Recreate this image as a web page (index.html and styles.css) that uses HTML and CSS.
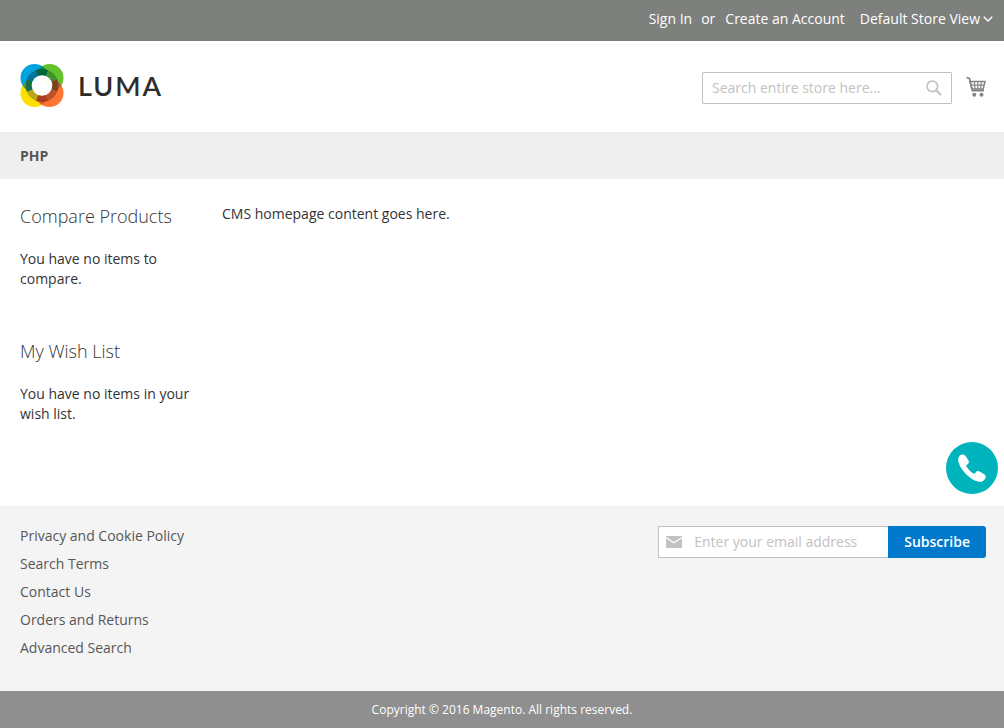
FILE: index.html
```html
<!DOCTYPE html>
<html lang="en">
<head>
<meta charset="utf-8">
<meta name="viewport" content="width=device-width, initial-scale=1">
<title>Home page</title>
<link rel="stylesheet" href="styles.css">
</head>
<body>
<header>
  <div class="panel">
    <a href="#">Sign In</a>
    <span class="or">or</span>
    <a href="#">Create an Account</a>
    <button class="switcher" type="button">Default Store View
      <svg width="10" height="6" viewBox="0 0 10 6" aria-hidden="true"><path d="M.7.7 5 5 9.3.7" fill="none" stroke="currentColor" stroke-width="1.4"/></svg>
    </button>
  </div>
  <div class="header-content">
    <a class="logo" href="#">
      <svg width="44" height="43" viewBox="-22 -21.500 44 43" aria-hidden="true">
        <circle cx="7.500" cy="-7.500" r="14" fill="#64c22d"/>
        <circle cx="-7.500" cy="7.500" r="14" fill="#ffdf00"/>
        <circle cx="7.500" cy="7.500" r="14" fill="#ff7433"/>
        <circle cx="-7.500" cy="-7.500" r="14" fill="#00a3df"/>
        <path d="M0-19.300Q3-17.500 5-14L0-8-5-14Q-3-17.500 0-19.300" fill="#008a55"/>
        <path d="M19.300 0Q17.500 3 14 5L8 0 14-5Q17.500-3 19.300 0" fill="#a36a2c"/>
        <path d="M0 19.300Q3 17.500 5 14L0 8-5 14Q-3 17.500 0 19.300" fill="#e25b24"/>
        <path d="M-19.300 0Q-17.500 3-14 5L-8 0-14-5Q-17.500-3-19.300 0" fill="#4d9950"/>
        <g fill="none" stroke-width="6.500">
          <path d="M-12.200-5A13.200 13.200 0 0 1-5-12.200" stroke="#00739a"/>
          <path d="M-5-12.200A13.200 13.200 0 0 1 5-12.200" stroke="#006536"/>
          <path d="M5-12.200A13.200 13.200 0 0 1 12.200-5" stroke="#43912d"/>
          <path d="M12.200-5A13.200 13.200 0 0 1 12.200 5" stroke="#7a431f"/>
          <path d="M12.200 5A13.200 13.200 0 0 1 5 12.200" stroke="#b9532c"/>
          <path d="M5 12.200A13.200 13.200 0 0 1-5 12.200" stroke="#a93c1c"/>
          <path d="M-5 12.200A13.200 13.200 0 0 1-12.200 5" stroke="#b9a51e"/>
          <path d="M-12.200 5A13.200 13.200 0 0 1-12.200-5" stroke="#19713f"/>
        </g>
        <circle r="10.300" fill="#fff"/>
      </svg>
      <span>LUMA</span>
    </a>
    <form class="search">
      <input type="search" aria-label="Search" placeholder="Search entire store here...">
      <button type="button" aria-label="Search">
        <svg width="16" height="16" viewBox="0 0 16 16" aria-hidden="true"><circle cx="6.300" cy="6.300" r="5.300" fill="none" stroke="#c2c2c2" stroke-width="1.700"/><path d="m10 10 5 5" stroke="#c2c2c2" stroke-width="2.200"/></svg>
      </button>
    </form>
    <a class="cart" href="#" aria-label="My Cart">
      <svg width="20" height="22" viewBox="0 0 20 22" aria-hidden="true">
        <path d="M.5 1.500 3.500 2.500 6.300 14.500H18" fill="none" stroke="#858585" stroke-width="1.800"/>
        <path d="M4 5.500h15L17.200 13H6z" fill="none" stroke="#858585" stroke-width="1.500"/>
        <path d="M5 9.200h13M8.300 5.500l.8 8M11.800 5.500v8M15.300 5.500l-.8 8" fill="none" stroke="#858585" stroke-width="1.200"/>
        <circle cx="8.300" cy="18.800" r="2" fill="#858585"/><circle cx="15.500" cy="18.800" r="2" fill="#858585"/>
      </svg>
    </a>
  </div>
</header>
<nav class="nav"><a href="#">PHP</a></nav>
<div class="columns">
  <aside>
    <section class="block">
      <h2>Compare Products</h2>
      <p>You have no items to compare.</p>
    </section>
    <section class="block">
      <h2>My Wish List</h2>
      <p>You have no items in your wish list.</p>
    </section>
  </aside>
  <main><p>CMS homepage content goes here.</p></main>
</div>
<footer>
  <div class="footer-content">
    <ul>
      <li><a href="#">Privacy and Cookie Policy</a></li>
      <li><a href="#">Search Terms</a></li>
      <li><a href="#">Contact Us</a></li>
      <li><a href="#">Orders and Returns</a></li>
      <li><a href="#">Advanced Search</a></li>
    </ul>
    <form class="newsletter">
      <label class="email">
        <svg width="16" height="12" viewBox="0 0 16 12" aria-hidden="true"><path d="M0 0h16v12H0z" fill="#c2c2c2"/><path d="m0 1.500 8 5.300 8-5.300" fill="none" stroke="#fff" stroke-width="1.300"/></svg>
        <input type="email" aria-label="Email address" placeholder="Enter your email address">
      </label>
      <button type="button">Subscribe</button>
    </form>
  </div>
  <small class="copyright">Copyright © 2016 Magento. All rights reserved.</small>
</footer>
<a class="call" href="#" aria-label="Call us">
  <svg width="28" height="28" viewBox="0 0 28 28" aria-hidden="true"><path d="M2.500 1C4.300 0 6.500.3 7.700 2.200L10.500 6.500C11.300 8 10.800 9.200 9.600 10.200L8.600 11C8.100 11.600 8.200 12.200 8.700 13C10.400 15.500 12.500 17.700 15 19.300C15.800 19.800 16.500 19.800 17 19.200L18 17.900C18.900 16.900 20.300 16.800 21.600 17.500L26.200 20.200C28 21.300 28.200 23.200 27 25C25 28 21.500 28.500 18 27C10.500 23.700 4 17 1 9.700C-.5 6 .2 2.500 2.500 1Z" fill="#fff"/></svg>
</a>
</body>
</html>
```
FILE: styles.css
```css
* { box-sizing: border-box; }
body {
  margin: 0;
  min-height: 100vh;
  display: flex;
  flex-direction: column;
  font: 14px/20px "Open Sans", "Noto Sans", sans-serif;
  color: #333;
  background: #fff;
}
a { color: inherit; text-decoration: none; }
button, input { font: inherit; }
button { cursor: pointer; border: 0; padding: 0; background: none; color: inherit; }
h2, p, ul { margin: 0; padding: 0; }
ul { list-style: none; }
svg { display: block; flex: none; }

.panel {
  display: flex;
  justify-content: flex-end;
  align-items: center;
  padding: 9px 11px 12px 20px;
  background: #7e807e;
  color: #fff;
}
.or { margin: 0 10px 0 9px; }
.switcher { display: flex; align-items: center; gap: 3px; margin-left: 15px; }
.header-content {
  display: flex;
  align-items: center;
  padding: 23px 18px 25px 20px;
}
.logo { display: flex; align-items: center; gap: 14px; margin-right: auto; }
.logo span {
  font: 600 27px/32px Lato, sans-serif;
  letter-spacing: 2px;
  color: #2d2d2d;
}
.search {
  display: flex;
  align-items: center;
  width: 250px;
  height: 32px;
  margin-top: 4px;
  padding: 0 9px;
  border: 1px solid #c2c2c2;
  border-radius: 1px;
}
input {
  flex: 1;
  min-width: 0;
  padding: 0;
  border: 0;
  outline: 0;
  background: none;
  color: #333;
}
input::placeholder { color: #c2c2c2; opacity: 1; }
.cart { margin: 2px 0 0 14px; }

.nav {
  padding: 14px 20px 13px;
  background: #efefef;
  color: #575757;
  font-weight: 700;
}
.columns {
  flex: 1;
  display: grid;
  grid-template-columns: 176px 1fr;
  gap: 26px;
  padding: 25px 20px 32px;
}
.block { margin-bottom: 50px; }
.block h2 {
  margin-bottom: 20px;
  font-size: 18px;
  line-height: 25px;
  font-weight: 300;
}

.footer-content {
  display: flex;
  justify-content: space-between;
  align-items: flex-start;
  padding: 20px 18px 25px 20px;
  background: #f4f4f4;
  color: #575757;
}
.footer-content li { margin-bottom: 8px; }
.newsletter { display: flex; }
.email {
  display: flex;
  align-items: center;
  gap: 12px;
  width: 230px;
  height: 32px;
  padding-left: 7px;
  border: 1px solid #c2c2c2;
  border-right: 0;
  background: #fff;
}
.newsletter button {
  padding: 0 16px;
  border-radius: 0 3px 3px 0;
  background: #0079cc;
  color: #fff;
  font-weight: 600;
}
.copyright {
  display: block;
  padding: 10px 20px;
  background: #8f8f8f;
  color: #fff;
  font-size: 12px;
  line-height: 17px;
  text-align: center;
}
.call {
  position: fixed;
  right: 6px;
  bottom: 234px;
  display: grid;
  place-items: center;
  width: 52px;
  height: 52px;
  border-radius: 50%;
  background: #00b4bd;
}
```
